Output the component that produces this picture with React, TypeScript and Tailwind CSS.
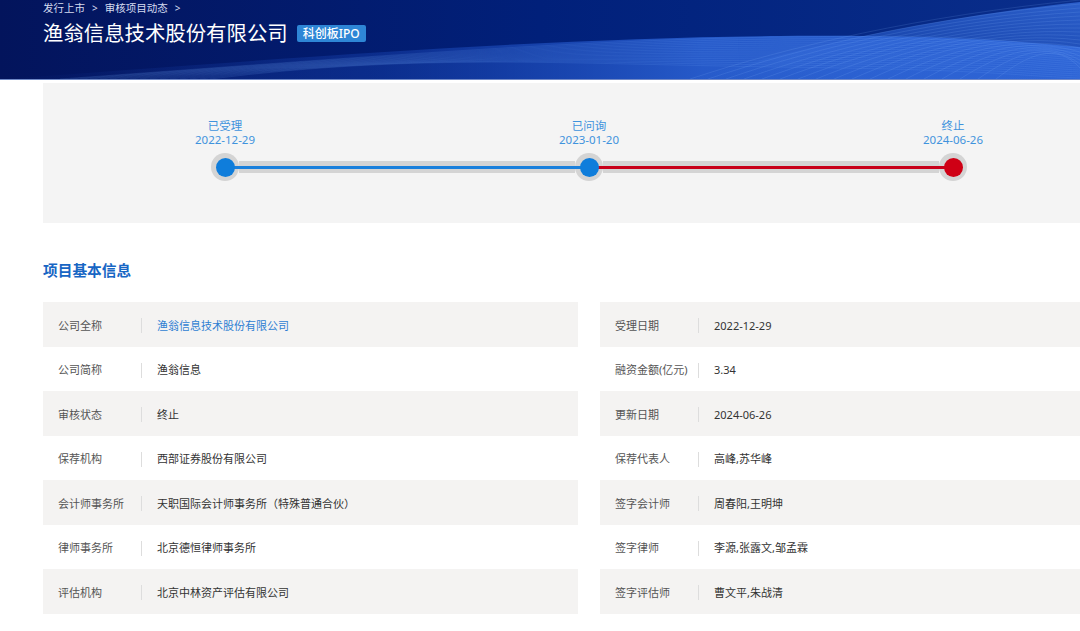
import React from "react";

const rows: [string, string, string, string][] = [
  ["公司全称", "渔翁信息技术股份有限公司", "受理日期", "2022-12-29"],
  ["公司简称", "渔翁信息", "融资金额(亿元)", "3.34"],
  ["审核状态", "终止", "更新日期", "2024-06-26"],
  ["保荐机构", "西部证券股份有限公司", "保荐代表人", "高峰,苏华峰"],
  ["会计师事务所", "天职国际会计师事务所（特殊普通合伙）", "签字会计师", "周春阳,王明坤"],
  ["律师事务所", "北京德恒律师事务所", "签字律师", "李源,张露文,邹孟霖"],
  ["评估机构", "北京中林资产评估有限公司", "签字评估师", "曹文平,朱战清"],
];

function Waves() {
  const bandLines = Array.from({ length: 16 }, (_, i) => i);
  const sweepLines = Array.from({ length: 18 }, (_, i) => i);
  return (
    <svg
      className="absolute inset-0 w-full h-full"
      viewBox="0 0 1080 79"
      preserveAspectRatio="none"
    >
      <defs>
        <linearGradient id="band" x1="0" y1="0" x2="1" y2="0">
          <stop offset="0" stopColor="#1d47b8" stopOpacity="0" />
          <stop offset="0.35" stopColor="#1d4cc0" stopOpacity="0.35" />
          <stop offset="0.65" stopColor="#2c63d6" stopOpacity="0.85" />
          <stop offset="1" stopColor="#2f66d8" stopOpacity="0.9" />
        </linearGradient>
        <linearGradient id="sweep" x1="0" y1="1" x2="1" y2="0">
          <stop offset="0" stopColor="#3a74e6" stopOpacity="0" />
          <stop offset="0.5" stopColor="#2f66d8" stopOpacity="0.5" />
          <stop offset="1" stopColor="#3a74e6" stopOpacity="0.7" />
        </linearGradient>
      </defs>
      <path
        d="M0,79 C220,64 520,38 780,36 C920,35 1010,40 1080,47 L1080,79 Z"
        fill="url(#band)"
      />
      <path
        d="M690,79 C800,48 930,18 1080,2 L1080,79 Z"
        fill="url(#sweep)"
      />
      {bandLines.map((i) => (
        <path
          key={"b" + i}
          d={`M${60 + i * 10},79 C${300 + i * 8},${62 - i * 0.6} ${560},${40 + i * 1.6} ${780},${37 + i * 2} S${1000},${42 + i * 2.2} 1080,${48 + i * 2}`}
          fill="none"
          stroke="#7fb0ff"
          strokeOpacity={0.22}
          strokeWidth={0.6}
        />
      ))}
      {sweepLines.map((i) => (
        <path
          key={"s" + i}
          d={`M${690 + i * 18},79 C${790 + i * 14},${46 + i * 0.5} ${920 + i * 8},${16 + i * 1.5} 1080,${0 + i * 4}`}
          fill="none"
          stroke="#8fbcff"
          strokeOpacity={0.25}
          strokeWidth={0.6}
        />
      ))}
    </svg>
  );
}

function Halo({ color }: { color: string }) {
  return (
    <div className="w-[28px] h-[28px] shrink-0 rounded-full bg-[#d4d4d4] flex items-center justify-center">
      <div className={`relative z-20 w-[19px] h-[19px] rounded-full ${color}`} />
    </div>
  );
}

function Segment({ color }: { color: string }) {
  return (
    <div className="flex-1 h-[12px] bg-[#d4d4d4] flex items-center">
      <div className={`relative z-10 -mx-[6px] w-[calc(100%+12px)] shrink-0 h-[3px] ${color}`} />
    </div>
  );
}

function Label({ title, date }: { title: string; date: string }) {
  return (
    <div className="w-[28px] shrink-0 flex flex-col items-center text-[11.5px] leading-[14px] text-[#3f93dd] whitespace-nowrap">
      <span>{title}</span>
      <span>{date}</span>
    </div>
  );
}

function Cell({ label, value, link }: { label: string; value: string; link?: boolean }) {
  return (
    <div className="flex items-center h-full pt-[3px]">
      <div className="w-[98px] pl-[15px] text-[#555555] whitespace-nowrap">{label}</div>
      <div className="w-px h-[15px] bg-[#dddddd]" />
      <div className={`pl-[15px] whitespace-nowrap ${link ? "text-[#2f7fd2]" : "text-[#333333]"}`}>
        {value}
      </div>
    </div>
  );
}

export default function App() {
  return (
    <div
      className="w-[1080px] h-[631px] overflow-hidden bg-white"
      style={{ fontFamily: '"Noto Sans", "Noto Sans CJK SC", sans-serif' }}
    >
      <header className="relative h-[80px] overflow-hidden bg-gradient-to-r from-[#03145c] via-[#01207a] to-[#0a2e8c] border-b border-[#6f88c6]">
        <Waves />
        <div className="relative pl-[43px] pt-[2px]">
          <div className="flex items-center text-[10.5px] leading-[12px] text-[#d6dcf0]">
            <span>发行上市</span>
            <span className="mx-[7px] text-[10px]">&gt;</span>
            <span>审核项目动态</span>
            <span className="ml-[7px] text-[10px]">&gt;</span>
          </div>
          <div className="mt-[7px] flex items-center gap-[9px]">
            <h1 className="text-[20.4px] leading-[24px] text-white font-normal">渔翁信息技术股份有限公司</h1>
            <span className="h-[17px] px-[6px] rounded-[2px] bg-[#2e86d6] text-white text-[12px] leading-[17px] font-medium">
              科创板IPO
            </span>
          </div>
        </div>
      </header>

      <div className="mt-[3px] ml-[43px] h-[140px] bg-[#f4f4f4] pt-[36px]">
        <div className="ml-[168px] w-[756px]">
          <div className="flex">
            <Label title="已受理" date="2022-12-29" />
            <div className="flex-1" />
            <Label title="已问询" date="2023-01-20" />
            <div className="flex-1" />
            <Label title="终止" date="2024-06-26" />
          </div>
          <div className="mt-[6px] flex items-center">
            <Halo color="bg-[#0f7ddb]" />
            <Segment color="bg-[#1a80dc]" />
            <Halo color="bg-[#0f7ddb]" />
            <Segment color="bg-[#c8001a]" />
            <Halo color="bg-[#cf0015]" />
          </div>
        </div>
      </div>

      <h2 className="mt-[37px] ml-[43px] text-[14.7px] leading-[20px] font-bold text-[#1766c4]">项目基本信息</h2>

      <div className="mt-[22px] ml-[43px] text-[11px]">
        {rows.map((r, i) => (
          <div key={i} className="grid grid-cols-[535px_535px] gap-x-[22px] h-[44.5px]">
            <div className={i % 2 === 0 ? "bg-[#f4f3f2]" : "bg-white"}>
              <Cell label={r[0]} value={r[1]} link={i === 0} />
            </div>
            <div className={i % 2 === 0 ? "bg-[#f4f3f2]" : "bg-white"}>
              <Cell label={r[2]} value={r[3]} />
            </div>
          </div>
        ))}
      </div>
    </div>
  );
}
